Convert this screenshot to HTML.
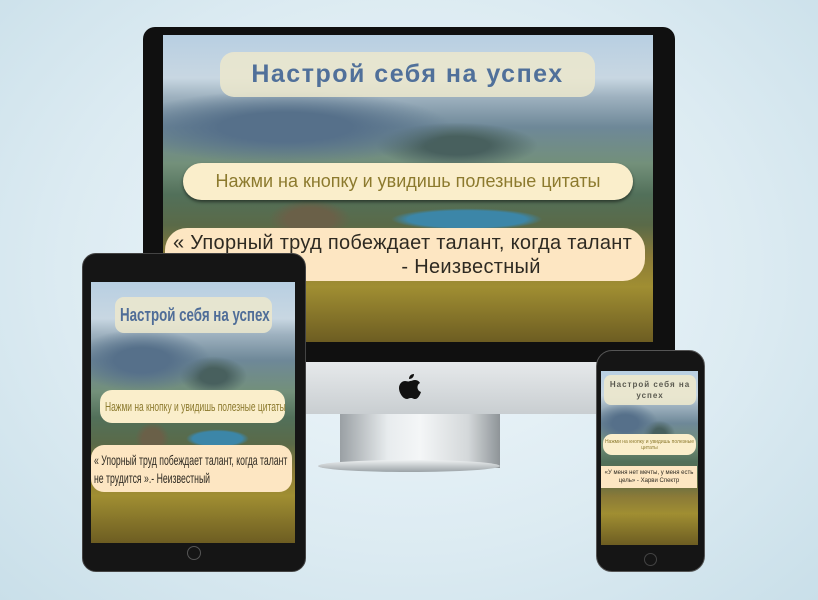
<!DOCTYPE html>
<html><head><meta charset="utf-8"><style>
*{margin:0;padding:0;box-sizing:border-box}
body{width:818px;height:600px;overflow:hidden;position:relative;font-family:"Liberation Sans",sans-serif;
background:radial-gradient(ellipse at 50% 45%,#f2f8fb 0%,#dcebf2 60%,#c9dfe9 100%);}
.abs{position:absolute}
.scr{position:absolute;overflow:hidden;background:
radial-gradient(ellipse 22% 5% at 62% 60%,#3c86a8 0 55%,transparent 70%),
radial-gradient(ellipse 12% 9% at 30% 60%,#6a6048 0 40%,transparent 70%),
radial-gradient(ellipse 45% 16% at 25% 30%,#56708a 0 30%,transparent 75%),
radial-gradient(ellipse 22% 10% at 60% 36%,#48605e 0 30%,transparent 75%),
linear-gradient(180deg,#b8cfe2 0%,#c8d7e2 14%,#9fb2c0 20%,#6e8898 30%,#73907a 42%,#52705a 52%,#5a6a48 62%,#8a7a38 72%,#a08e32 82%,#6d5d22 100%);}
.box{position:absolute;display:flex;align-items:center;justify-content:center;text-align:center;white-space:nowrap}
.sx{display:inline-block;transform-origin:left center}
</style></head><body>
<!-- monitor -->
<div class="abs" style="left:340px;top:410px;width:160px;height:58px;background:linear-gradient(90deg,#9aa0a4,#e8ecee 30%,#f4f6f7 50%,#d4d8da 80%,#8e9498)"></div>
<div class="abs" style="left:318px;top:460px;width:182px;height:12px;border-radius:50%;background:linear-gradient(#eef1f2,#9aa2a6)"></div>
<div class="abs" style="left:143px;top:27px;width:532px;height:337px;background:#101010;border-radius:12px 12px 0 0"></div>
<div class="abs" style="left:143px;top:362px;width:532px;height:52px;background:linear-gradient(#e6e9eb,#c9ced1);border-radius:0 0 10px 10px"></div>
<svg class="abs" style="left:398px;top:374px" width="24" height="28" viewBox="0 0 24 28"><path d="M16 0c0 3-2 5-5 5 0-3 2-5 5-5zM12 7c2 0 3-1 5-1 2 0 4 1 5 3-4 2-3 8 1 9-1 3-3 7-6 7-2 0-2-1-4-1s-3 1-4 1C5 25 1 19 1 14c0-4 3-7 6-7 2 0 3 1 5 0z" fill="#111"/></svg>
<div class="scr" style="left:163px;top:35px;width:490px;height:307px">
 <div class="box" style="left:57px;top:17px;width:375px;height:45px;border-radius:14px;background:rgba(236,232,205,.85);color:#50709a;font-size:25px;font-weight:bold;letter-spacing:1.5px">Настрой себя на успех</div>
 <div class="box" style="left:20px;top:128px;width:450px;height:37px;border-radius:19px;background:#faeecb;color:#8c7a2e;font-size:18px;box-shadow:0 2px 3px rgba(0,0,0,.5)">Нажми на кнопку и увидишь полезные цитаты</div>
 <div class="box" style="left:2px;top:193px;width:480px;height:53px;border-radius:22px;background:#fde6c2;color:#2e2a22;font-size:20px;line-height:24px;text-align:left;justify-content:flex-start;padding-left:8px;letter-spacing:.3px;white-space:normal">« Упорный труд побеждает талант, когда талант<br>&nbsp;&nbsp;&nbsp;&nbsp;&nbsp;&nbsp;&nbsp;&nbsp;&nbsp;&nbsp;&nbsp;&nbsp;&nbsp;&nbsp;&nbsp;&nbsp;&nbsp;&nbsp;&nbsp;&nbsp;&nbsp;&nbsp;&nbsp;&nbsp;&nbsp;&nbsp;&nbsp;&nbsp;&nbsp;&nbsp;&nbsp;&nbsp;&nbsp;&nbsp;&nbsp;&nbsp;&nbsp;&nbsp;&nbsp;- Неизвестный</div>
</div>
<!-- tablet -->
<div class="abs" style="left:82px;top:253px;width:224px;height:319px;background:#151515;border-radius:14px;border:1px solid #444"></div>
<div class="abs" style="left:187px;top:546px;width:14px;height:14px;border-radius:50%;border:1px solid #555"></div>
<div class="scr" style="left:91px;top:282px;width:204px;height:261px">
 <div class="box" style="left:24px;top:15px;width:157px;height:36px;border-radius:9px;background:rgba(236,232,205,.85);color:#4f6d98;font-size:18px;font-weight:bold;justify-content:flex-start;padding-left:5px"><span class="sx" style="transform:scaleX(.74)">Настрой себя на успех</span></div>
 <div class="box" style="left:9px;top:108px;width:185px;height:33px;border-radius:12px;background:#faeecb;color:#8c7a2e;font-size:13px;justify-content:flex-start;padding-left:5px"><span class="sx" style="transform:scaleX(.65)">Нажми на кнопку и увидишь полезные цитаты</span></div>
 <div class="box" style="left:0;top:163px;width:201px;height:47px;border-radius:13px;background:#fde6c2;color:#2e2a22;font-size:14px;line-height:18px;text-align:left;justify-content:flex-start;padding-left:3px"><span class="sx" style="transform:scaleX(.62)">« Упорный труд побеждает талант, когда талант<br>не трудится ».- Неизвестный</span></div>
</div>
<!-- phone -->
<div class="abs" style="left:596px;top:350px;width:109px;height:222px;background:#151515;border-radius:16px;border:1px solid #555"></div>
<div class="abs" style="left:644px;top:553px;width:13px;height:13px;border-radius:50%;border:1px solid #444"></div>
<div class="scr" style="left:601px;top:371px;width:97px;height:174px">
 <div class="box" style="left:3px;top:4px;width:92px;height:30px;border-radius:7px;background:rgba(236,232,205,.9);color:#5a5a50;font-size:8px;font-weight:bold;line-height:11px;letter-spacing:1px;white-space:normal">Настрой себя на успех</div>
 <div class="box" style="left:2px;top:63px;width:93px;height:21px;border-radius:9px;background:#faeecb;color:#8c7a2e;font-size:5px;line-height:6px;white-space:normal">Нажми на кнопку и увидишь полезные цитаты</div>
 <div class="box" style="left:0;top:95px;width:96px;height:22px;background:#fde6c2;color:#2e2a22;font-size:6px;line-height:8px;white-space:normal">«У меня нет мечты, у меня есть цель» - Харви Спектр</div>
</div>
</body></html>
